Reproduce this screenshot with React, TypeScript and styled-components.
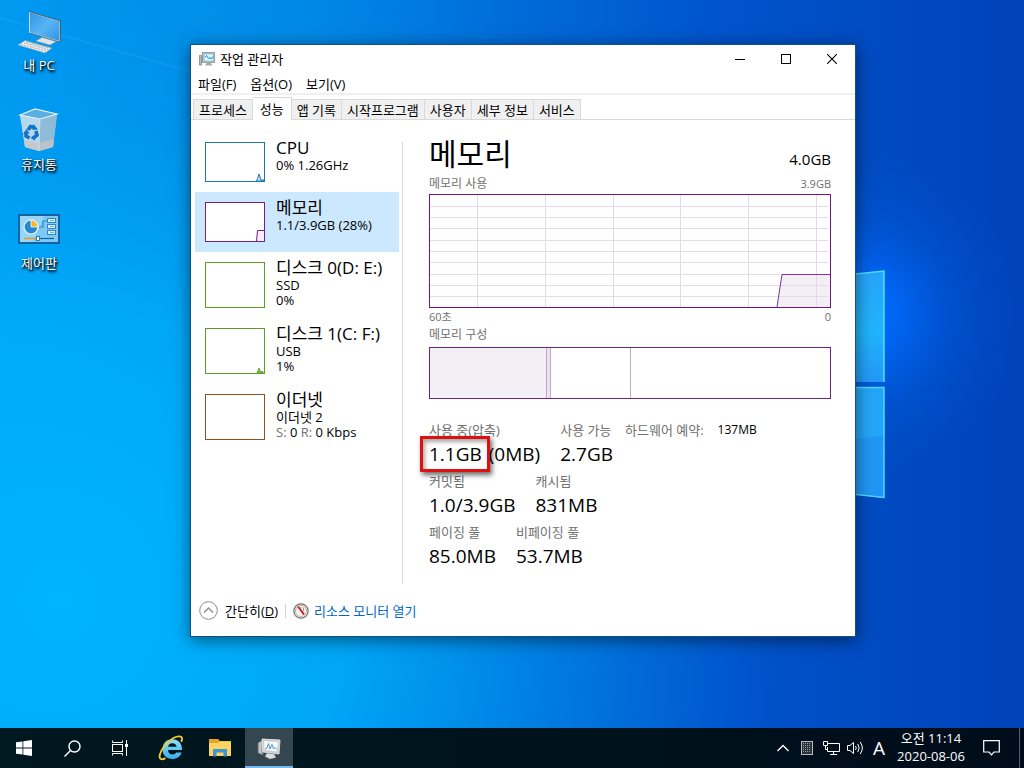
import React from "react";
import styled, { createGlobalStyle, css } from "styled-components";

const GlobalStyle = createGlobalStyle`
  *, *::before, *::after { box-sizing: border-box; }
  body {
    margin: 0;
    background: #0078d7;
    font-family: "Open Sans", "Noto Sans CJK KR", sans-serif;
    font-size: 13px;
    color: #000;
  }
  button { font: inherit; color: inherit; background: none; border: 0; padding: 0; }
  h1, h2, p, dl, dd, dt, ul { margin: 0; padding: 0; font-weight: 400; }
  svg { display: block; }
`;

/* ---------- desktop ---------- */

const Desktop = styled.div`
  position: relative;
  display: flex;
  flex-direction: column;
  min-height: 100vh;
  overflow: hidden;
`;

const WallpaperArt = styled.svg`
  position: absolute;
  inset: 0;
  width: 100%;
  height: 100%;
`;

const Workspace = styled.main`
  position: relative;
  flex: 1;
  display: grid;
  grid-template-columns: 190px minmax(0, 1fr);
  align-items: start;
  padding-right: 168px;
`;

const IconColumn = styled.nav`
  display: flex;
  flex-direction: column;
  align-items: flex-start;
  gap: 32px;
  padding: 8px 0 0 1px;
`;

const Shortcut = styled.button`
  display: flex;
  flex-direction: column;
  align-items: center;
  width: 76px;
  height: 67px;
  line-height: 19px;
  color: #fff;
  text-shadow: 1px 1px 2px #000, 1px 2px 3px #000;
`;

/* ---------- window ---------- */

const Window = styled.section`
  margin-top: 44px;
  margin-bottom: 24px;
  background: #fff;
  border: 1px solid #12507f;
  box-shadow: 0 3px 16px rgba(0, 0, 0, 0.5);
`;

const TitleBar = styled.header`
  display: flex;
  align-items: center;
  height: 28px;
  padding-left: 8px;
  gap: 5px;
`;

const TitleText = styled.h2`
  flex: 1;
  font-size: 13px;
  line-height: 18px;
`;

const CaptionButtons = styled.div`
  display: flex;
  height: 28px;
`;

const CaptionButton = styled.button`
  display: grid;
  place-items: center;
  width: 46px;
`;

const MenuBar = styled.nav`
  display: flex;
  gap: 14px;
  height: 22px;
  padding: 2px 0 0 7px;
  line-height: 18px;
  border-bottom: 2px solid #f0f0f0;
`;

const TabBar = styled.div`
  display: flex;
  align-items: flex-end;
  height: 25px;
  padding-left: 2px;
  border-bottom: 1px solid #d9d9d9;
`;

const Tab = styled.button<{ $active?: boolean }>`
  height: 20px;
  padding: 0 5px;
  line-height: 18px;
  white-space: nowrap;
  background: #f0f0f0;
  border: solid #d9d9d9;
  border-width: 1px 1px 0 0;

  &:first-child { border-left-width: 1px; }

  ${(p) =>
    p.$active &&
    css`
      height: 23px;
      padding: 0 7px;
      margin-bottom: -1px;
      background: #fff;
    `}
`;

const Body = styled.div`
  display: flex;
  padding: 12px 24px 0 4px;
`;

const Sidebar = styled.div`
  display: flex;
  flex-direction: column;
  width: 204px;
  flex: none;
`;

const ResourceItem = styled.button<{ $selected?: boolean }>`
  display: flex;
  align-items: flex-start;
  gap: 11px;
  padding: 10px;
  text-align: left;
  white-space: nowrap;
  background: ${(p) => (p.$selected ? "#cce8ff" : "transparent")};
`;

const Thumb = styled.span<{ $color: string; $tall?: boolean }>`
  flex: none;
  width: 60px;
  height: ${(p) => (p.$tall ? 46 : 40)}px;
  background: #fff;
  border: 1px solid ${(p) => p.$color};
`;

const ResourceText = styled.span`
  display: flex;
  flex-direction: column;
  margin: -4px 0;
  line-height: 15px;
`;

const ResourceName = styled.span`
  font-size: 17px;
  line-height: 20px;
`;

const Dim = styled.span`
  color: #707070;
`;

const Divider = styled.div`
  flex: none;
  width: 1px;
  margin: 10px 26px 0 3px;
  background: #d9d9d9;
`;

const Detail = styled.div`
  flex: 1;
  min-width: 0;
  padding: 4px 0 16px;
`;

const DetailHeader = styled.header`
  display: flex;
  justify-content: space-between;
  align-items: baseline;
  height: 39px;
`;

const Heading = styled.h1`
  font-size: 30px;
  line-height: 36px;
`;

const Capacity = styled.span`
  font-size: 15px;
`;

const Caption = styled.div`
  display: flex;
  justify-content: space-between;
  font-size: 12px;
  line-height: 18px;
  color: #707070;
`;

const Small = styled.span`
  font-size: 11px;
`;

const Chart = styled.div`
  height: 114px;
  margin-top: 1px;
  border: 1px solid #70177f;

  svg { width: 100%; height: 100%; }
`;

const Composition = styled.div`
  display: flex;
  height: 52px;
  margin: 3px 0 22px;
  border: 1px solid #6b2479;
`;

const Segment = styled.div<{ $share: number; $fill?: string; $last?: boolean }>`
  flex: ${(p) => p.$share} 1 0;
  background: ${(p) => p.$fill ?? "#fff"};
  border-right: ${(p) => (p.$last ? "0" : "1px solid #c3a7cc")};
`;

const Stats = styled.div`
  display: flex;
  flex-direction: column;
  gap: 6px;
`;

const StatRow = styled.dl`
  display: flex;
  gap: 20px;
  white-space: nowrap;
`;

const Stat = styled.div`
  display: flex;
  flex-direction: column;
  gap: 3px;
`;

const StatLabel = styled.dt`
  line-height: 18px;
  color: #707070;
`;

const StatValue = styled.dd`
  font-size: 19px;
  line-height: 24px;
`;

const InlineStat = styled.div`
  display: flex;
  gap: 14px;
  margin-left: -8px;
  line-height: 18px;
`;

const InlineValue = styled.dd`
  font-size: 12px;
`;

const Highlighted = styled.span`
  position: relative;
  margin-right: 2px;

  &::after {
    content: "";
    position: absolute;
    inset: -5px -8px -5px -9px;
    border: 3px solid #e01010;
    box-shadow: 2px 3px 5px rgba(0, 0, 0, 0.6), inset 2px 3px 4px rgba(0, 0, 0, 0.35);
  }
`;

const Footer = styled.footer`
  display: flex;
  align-items: center;
  height: 52px;
  padding: 1px 8px 0;
`;

const FooterButton = styled.button`
  display: flex;
  align-items: center;
  gap: 7px;
`;

const FooterDivider = styled.span`
  width: 1px;
  height: 14px;
  margin: 0 7px;
  background: #d0d0d0;
`;

const FooterLink = styled.a`
  display: flex;
  align-items: center;
  gap: 5px;
  color: #0066cc;
  text-decoration: none;
`;

/* ---------- taskbar ---------- */

const Taskbar = styled.footer`
  position: relative;
  display: flex;
  justify-content: space-between;
  height: 40px;
  background: linear-gradient(90deg, #001820, #00121c 60%, #000c1a);
  color: #fff;
`;

const TaskGroup = styled.div`
  display: flex;
`;

const AppGroup = styled.div`
  display: flex;
  gap: 1px;
  margin-left: 3px;
`;

const TaskButton = styled.button<{ $active?: boolean }>`
  display: grid;
  place-items: center;
  width: 48px;
  height: 40px;
  box-shadow: inset 0 -2px 0 ${(p) => (p.$active ? "#76b9ed" : "transparent")};
  background: ${(p) => (p.$active ? "#34464f" : "transparent")};
`;

const Tray = styled.div`
  display: flex;
  align-items: center;
`;

const TrayButton = styled.button`
  display: grid;
  place-items: center;
  width: 24px;
  height: 40px;
  font-size: 19px;
`;

const Clock = styled.time`
  width: 72px;
  margin: 0 0 2px 4px;
  text-align: center;
  line-height: 18px;
`;

const NoticeButton = styled.button`
  display: grid;
  place-items: center;
  width: 48px;
  height: 40px;
  margin-right: 4px;
`;

const PeekEdge = styled.button`
  width: 5px;
  height: 40px;
  border-left: 1px solid #56616c;
`;

/* ---------- drawings ---------- */

const Wallpaper = () => (
  <WallpaperArt viewBox="0 0 1024 768" preserveAspectRatio="none" aria-hidden="true">
    <defs>
      <linearGradient id="base" x1="0" y1="0" x2="1" y2="0">
        <stop offset="0" stopColor="#009cf2" />
        <stop offset="0.3" stopColor="#0088e6" />
        <stop offset="0.5" stopColor="#006cd8" />
        <stop offset="0.7" stopColor="#0054cc" />
        <stop offset="1" stopColor="#0042b8" />
      </linearGradient>
      <radialGradient id="cyan" gradientUnits="userSpaceOnUse" cx="60" cy="600" r="720">
        <stop offset="0" stopColor="#00b4fe" />
        <stop offset="0.4" stopColor="#00acfa" stopOpacity="0.85" />
        <stop offset="0.7" stopColor="#0098f0" stopOpacity="0.4" />
        <stop offset="1" stopColor="#0084e4" stopOpacity="0" />
      </radialGradient>
      <radialGradient id="glow" gradientUnits="userSpaceOnUse" cx="860" cy="315" r="160">
        <stop offset="0" stopColor="#006cff" />
        <stop offset="0.25" stopColor="#0069fa" stopOpacity="0.85" />
        <stop offset="0.6" stopColor="#005ee4" stopOpacity="0.35" />
        <stop offset="1" stopColor="#0058d8" stopOpacity="0" />
      </radialGradient>
      <linearGradient id="pane" x1="0" y1="0" x2="0" y2="1">
        <stop offset="0" stopColor="#28a4fa" />
        <stop offset="0.55" stopColor="#20b4fc" />
        <stop offset="1" stopColor="#2498f6" />
      </linearGradient>
    </defs>
    <rect width="1024" height="768" fill="url(#base)" />
    <rect width="1024" height="768" fill="url(#cyan)" />
    <rect width="1024" height="768" fill="url(#glow)" />
    <path d="M0 18 L400 130" stroke="#3cb4fa" strokeWidth="2" opacity="0.2" />
    <path d="M700 290 L884 271 V382 H700Z" fill="url(#pane)" />
    <path d="M700 387 H884 V498 L700 478Z" fill="#2196f4" />
    <path d="M700 387 H884 V436 L700 455Z" fill="#24a6f8" />
    <path d="M700 290 L884 271 V382" fill="none" stroke="#4ce0fc" strokeWidth="1.500" />
    <path d="M700 387.500 H884 V497.500 L700 478" fill="none" stroke="#4cd8fc" strokeWidth="1.500" />
  </WallpaperArt>
);

const PcIcon = () => (
  <svg width="48" height="48" viewBox="0 0 48 48" aria-hidden="true">
    <defs>
      <linearGradient id="scr" x1="0" y1="0" x2="1" y2="1">
        <stop offset="0" stopColor="#2f94e4" />
        <stop offset="0.5" stopColor="#58b4f4" />
        <stop offset="1" stopColor="#2f94e4" />
      </linearGradient>
    </defs>
    <path d="M14.500 4 L44.500 13 V33.500 L14.500 24.500Z" fill="url(#scr)" stroke="#cbdbe4" strokeWidth="1" />
    <path d="M14 3.500 L45.200 12.800 V34.200" fill="none" stroke="#36505f" strokeWidth="0.900" />
    <path d="M15 25 L45 34.200" fill="none" stroke="#4a6472" strokeWidth="0.800" />
    <path d="M27 29 L33 31 L33 33 L27 32Z" fill="#8b979e" />
    <path d="M21 33 L27 29.500 L41 33.500 L35 37Z" fill="#dfe5e8" stroke="#96a2a8" strokeWidth="0.500" />
    <path d="M3 37 L10 32.500 L37 40 L30 45Z" fill="#eef1f3" stroke="#8f9aa2" strokeWidth="0.600" />
    <path d="M6 36.500 L31 43 M9 35 L33 41.500 M11 33.800 L35 40.300" stroke="#96a3ab" strokeWidth="0.900" strokeDasharray="2 1" />
  </svg>
);

const BinIcon = () => (
  <svg width="48" height="48" viewBox="0 0 48 48" aria-hidden="true">
    <path d="M5 8 L20 2 L42 7 L38 40 L24 44 L10 40Z" fill="#9cc9e4" />
    <path d="M5 8 L25 12 L24 44 L10 40Z" fill="#b6d8ec" />
    <path d="M25 12 L42 7 L38 40 L24 44Z" fill="#8dbbd8" />
    <path d="M9 33 L24 36 L39 32 L38 40 L24 44 L10 40Z" fill="#c9c4c6" opacity="0.8" />
    <path d="M5 8 L20 2 L42 7 L25 12Z" fill="#5aaee0" stroke="#e4f1f8" strokeWidth="1.200" />
    <path d="M25 12 L24 44" stroke="#d8eaf4" strokeWidth="0.600" />
    <g fill="none" stroke="#1272c8" strokeWidth="3.600">
      <path d="M13 23 L15.500 19.500 L19.500 20.500" />
      <path d="M21 24 L22 28 L18.500 31" />
      <path d="M14.500 31 L11 29 L11 25.500" />
    </g>
    <path d="M18.500 17 L23 22.500 L17.500 23Z M20 27.500 L15.500 31 L20 33.500Z M8 27 L11.500 22 L14.500 26.500Z" fill="#1272c8" />
  </svg>
);

const PanelIcon = () => (
  <svg width="48" height="48" viewBox="0 0 48 48" aria-hidden="true">
    <rect x="4" y="9" width="40" height="28" fill="#7ccaf5" stroke="#15639f" strokeWidth="2" />
    <path d="M5 10 H29 L18 36 H5Z" fill="#a4dbf9" opacity="0.7" />
    <circle cx="16" cy="21" r="7" fill="#2688d0" stroke="#e8f6fe" strokeWidth="1.200" />
    <path d="M16 21 V14 A7 7 0 0 1 23 21Z" fill="#f8b62c" stroke="#fff" strokeWidth="0.800" />
    <path d="M24 21 H28 V15 H32" fill="none" stroke="#3585bd" strokeWidth="1.200" />
    <g fill="#d4effc" stroke="#3585bd" strokeWidth="1">
      <rect x="32.500" y="12.500" width="8" height="4" />
      <rect x="32.500" y="18.500" width="8" height="4" />
      <rect x="32.500" y="24.500" width="8" height="4" />
    </g>
    <path d="M35 14.500 H39 M35 20.500 H39 M35 26.500 H39" stroke="#6fb6e0" strokeWidth="1" />
    <path d="M9 32.500 H22" stroke="#e09a20" strokeWidth="1.500" />
    <path d="M24 32.500 H39" stroke="#15639f" strokeWidth="1.200" />
    <rect x="21.500" y="30.500" width="3" height="4" fill="#fff" stroke="#15639f" strokeWidth="0.800" />
  </svg>
);

const MonitorIcon = ({ size }: { size: number }) => (
  <svg width={size} height={size} viewBox="0 0 16 16" aria-hidden="true">
    <path d="M0.500 4.500 H2.500 V14 H0.500Z" fill="#b4b8ba" stroke="#74797c" strokeWidth="0.700" />
    <rect x="3.500" y="1.500" width="12" height="10" fill="#b9bdbf" stroke="#8a8f92" strokeWidth="0.800" />
    <rect x="5" y="3" width="9" height="7" fill="#dcf6fd" stroke="#6fb4cc" strokeWidth="0.500" />
    <path d="M5.500 6.500 L7.500 4.500 L9.500 7.500 L11 6.500 L12 8 L14 5.500" fill="none" stroke="#2a8fcc" strokeWidth="1" />
    <path d="M8 11.500 H11.500 L13.500 14.500 H6Z" fill="#a7abad" />
  </svg>
);

const TaskMonitorIcon = () => (
  <svg width="24" height="24" viewBox="0 0 24 24" aria-hidden="true">
    <path d="M1 7 L6 4 V19 L1 17Z" fill="#a7aaac" stroke="#6f7476" strokeWidth="0.600" />
    <path d="M3 6 L3 17" stroke="#dfe1e2" />
    <path d="M5 3 L23 4 L22 18 L6 16Z" fill="#c9cccd" stroke="#f0f1f1" strokeWidth="0.800" />
    <path d="M7 5 L21 6 L20 15.500 L7.500 14Z" fill="#f4f8fa" />
    <path d="M8 13 L10 12 L11.500 7.500 L13 13 L15 8.500 L16.500 13 L18 11.500 L20 13.500" fill="none" stroke="#4a8cc4" strokeWidth="0.900" />
    <path d="M10 17 L17 18 L19 21.500 L13 23 L8 20.500Z" fill="#dcdede" stroke="#8c9092" strokeWidth="0.500" />
  </svg>
);

const GaugeIcon = () => (
  <svg width="16" height="16" viewBox="0 0 16 16" aria-hidden="true">
    <circle cx="8" cy="8" r="7.200" fill="#e9e6e0" stroke="#77736c" strokeWidth="1.200" />
    <circle cx="8" cy="8" r="5.500" fill="#f7f3ec" stroke="#b0aba2" strokeWidth="0.800" />
    <path d="M4 3.500 L6 3.500 L11.800 11 L10.200 12Z" fill="#c4161c" />
    <path d="M8 4 V6 M10.500 4.500 V8" stroke="#8a857d" strokeWidth="0.800" />
  </svg>
);

const IeIcon = () => (
  <svg width="26" height="26" viewBox="0 0 26 26" aria-hidden="true">
    <defs>
      <linearGradient id="ie" x1="0" y1="0" x2="0" y2="1">
        <stop offset="0" stopColor="#8fe0fb" />
        <stop offset="1" stopColor="#38aee8" />
      </linearGradient>
    </defs>
    <path
      fillRule="evenodd"
      fill="url(#ie)"
      d="M24 15 H10 C10.200 18 12 19.500 14.500 19.500 C16.400 19.500 17.600 18.700 18.200 17.500 H23.600 C22.400 21.500 19 24 14.300 24 C8.600 24 4.500 20 4.500 14.200 C4.500 8.300 8.600 4.200 14.300 4.200 C20.400 4.200 24.300 8.500 24 15Z M10.100 11.700 H18.600 C18.400 9.500 16.800 8.200 14.400 8.200 C12 8.200 10.400 9.500 10.100 11.700Z"
    />
    <path
      d="M7.500 23.200 C3.500 25.300 0.800 24.300 1.800 19.800 C3 14.500 9 6.500 15.500 3 C19.500 0.900 23.600 0.800 24 3.200 C24.200 4.400 23.800 5.500 23.200 6.800"
      fill="none"
      stroke="#f3c832"
      strokeWidth="1.900"
    />
  </svg>
);

const FolderIcon = () => (
  <svg width="22" height="20" viewBox="0 0 22 20" aria-hidden="true">
    <path d="M0 1 H9 L11 3 H22 V18 H0Z" fill="#e5a723" />
    <path d="M0 5 H9 L11 3.500 H22 V18 H0Z" fill="#fbd464" />
    <path d="M4 18.500 V11 H18 V18.500 H14.500 V14.500 H7.500 V18.500Z" fill="#3e94d4" />
  </svg>
);

/* ---------- data ---------- */

type Resource = {
  name: string;
  lines: React.ReactNode[];
  color: string;
  tall?: boolean;
  selected?: boolean;
  trace?: React.ReactNode;
};

const resources: Resource[] = [
  {
    name: "CPU",
    lines: ["0% 1.26GHz"],
    color: "#1a78a8",
    trace: (
      <svg width="58" height="38" viewBox="0 0 58 38" aria-hidden="true">
        <path d="M50 38 L51.500 36 L53 31 L55 37 L58 37 V38Z" fill="#d4e9f4" stroke="#1a78a8" />
      </svg>
    ),
  },
  {
    name: "메모리",
    lines: ["1.1/3.9GB (28%)"],
    color: "#7b1a90",
    selected: true,
    trace: (
      <svg width="58" height="38" viewBox="0 0 58 38" aria-hidden="true">
        <path d="M50.500 38 L51.500 27.500 H58 V38Z" fill="#f3eff5" />
        <path d="M50.500 38 L51.500 27.500 H58" fill="none" stroke="#7b1a90" />
      </svg>
    ),
  },
  { name: "디스크 0(D: E:)", lines: ["SSD", "0%"], color: "#5a9e28", tall: true },
  {
    name: "디스크 1(C: F:)",
    lines: ["USB", "1%"],
    color: "#5a9e28",
    tall: true,
    trace: (
      <svg width="58" height="44" viewBox="0 0 58 44" aria-hidden="true">
        <path d="M51 44 L53 39 L54.500 43 L56 42 L57.500 44Z" fill="#7dbb50" stroke="#5a9e28" strokeWidth="0.800" />
      </svg>
    ),
  },
  {
    name: "이더넷",
    lines: [
      "이더넷 2",
      <>
        <Dim>S:</Dim> 0 <Dim>R:</Dim> 0 Kbps
      </>,
    ],
    color: "#8e4f22",
    tall: true,
  },
];

const tabs = ["프로세스", "성능", "앱 기록", "시작프로그램", "사용자", "세부 정보", "서비스"];
const menus = ["파일(F)", "옵션(O)", "보기(V)"];
const gridX = [47.5, 115.5, 183.5, 250.5, 318.5, 386.5];
const gridY = [11.5, 22.5, 33.5, 45.5, 56.5, 67.5, 79.5, 90.5, 101.5];

/* ---------- page ---------- */

const MemoryChart = () => (
  <Chart>
    <svg viewBox="0 0 400 112" preserveAspectRatio="none" role="img" aria-label="메모리 사용">
      <path d="M347 112 L352 79.500 H400 V112Z" fill="#f3f0f5" />
      {gridX.map((x) => (
        <path key={x} d={`M${x} 0 V112`} stroke="#e6dae9" />
      ))}
      {gridY.map((y) => (
        <path key={y} d={`M0 ${y} H398`} stroke="#e6dae9" />
      ))}
      <path d="M347 112 L352 79.500 H400" fill="none" stroke="#84309a" />
    </svg>
  </Chart>
);

const TaskManager = () => (
  <Window aria-label="작업 관리자">
    <TitleBar>
      <MonitorIcon size={16} />
      <TitleText>작업 관리자</TitleText>
      <CaptionButtons>
        <CaptionButton aria-label="최소화">
          <svg width="10" height="10" viewBox="0 0 10 10"><path d="M0 5.500 H10" stroke="#000" /></svg>
        </CaptionButton>
        <CaptionButton aria-label="최대화">
          <svg width="10" height="10" viewBox="0 0 10 10"><rect x="0.500" y="0.500" width="9" height="9" fill="none" stroke="#000" /></svg>
        </CaptionButton>
        <CaptionButton aria-label="닫기">
          <svg width="10" height="10" viewBox="0 0 10 10"><path d="M0 0 L10 10 M10 0 L0 10" stroke="#000" strokeWidth="1.100" /></svg>
        </CaptionButton>
      </CaptionButtons>
    </TitleBar>
    <MenuBar>
      {menus.map((m) => (
        <button key={m}>{m}</button>
      ))}
    </MenuBar>
    <TabBar role="tablist">
      {tabs.map((t) => (
        <Tab key={t} role="tab" aria-selected={t === "성능"} $active={t === "성능"}>
          {t}
        </Tab>
      ))}
    </TabBar>
    <Body>
      <Sidebar>
        {resources.map((r) => (
          <ResourceItem key={r.name} $selected={r.selected}>
            <Thumb $color={r.color} $tall={r.tall}>{r.trace}</Thumb>
            <ResourceText>
              <ResourceName>{r.name}</ResourceName>
              {r.lines.map((line, i) => (
                <span key={i}>{line}</span>
              ))}
            </ResourceText>
          </ResourceItem>
        ))}
      </Sidebar>
      <Divider />
      <Detail>
        <DetailHeader>
          <Heading>메모리</Heading>
          <Capacity>4.0GB</Capacity>
        </DetailHeader>
        <Caption>
          <span>메모리 사용</span>
          <Small>3.9GB</Small>
        </Caption>
        <MemoryChart />
        <Caption>
          <Small>60초</Small>
          <Small>0</Small>
        </Caption>
        <Caption>메모리 구성</Caption>
        <Composition>
          <Segment $share={116} $fill="#f3f0f5" />
          <Segment $share={3} $fill="#eee2f0" />
          <Segment $share={79} />
          <Segment $share={200} $last />
        </Composition>
        <Stats>
          <StatRow>
            <Stat>
              <StatLabel>사용 중(압축)</StatLabel>
              <StatValue>
                <Highlighted>1.1GB</Highlighted> (0MB)
              </StatValue>
            </Stat>
            <Stat>
              <StatLabel>사용 가능</StatLabel>
              <StatValue>2.7GB</StatValue>
            </Stat>
            <InlineStat>
              <StatLabel>하드웨어 예약:</StatLabel>
              <InlineValue>137MB</InlineValue>
            </InlineStat>
          </StatRow>
          <StatRow>
            <Stat>
              <StatLabel>커밋됨</StatLabel>
              <StatValue>1.0/3.9GB</StatValue>
            </Stat>
            <Stat>
              <StatLabel>캐시됨</StatLabel>
              <StatValue>831MB</StatValue>
            </Stat>
          </StatRow>
          <StatRow>
            <Stat>
              <StatLabel>페이징 풀</StatLabel>
              <StatValue>85.0MB</StatValue>
            </Stat>
            <Stat>
              <StatLabel>비페이징 풀</StatLabel>
              <StatValue>53.7MB</StatValue>
            </Stat>
          </StatRow>
        </Stats>
      </Detail>
    </Body>
    <Footer>
      <FooterButton>
        <svg width="19" height="19" viewBox="0 0 19 19" aria-hidden="true">
          <circle cx="9.500" cy="9.500" r="8.800" fill="#fff" stroke="#8c8c8c" />
          <path d="M5 11.500 L9.500 7 L14 11.500" fill="none" stroke="#8c8c8c" strokeWidth="1.400" />
        </svg>
        <span>간단히(<u>D</u>)</span>
      </FooterButton>
      <FooterDivider />
      <FooterLink href="#resmon">
        <GaugeIcon />
        리소스 모니터 열기
      </FooterLink>
    </Footer>
  </Window>
);

export default function App() {
  return (
    <>
      <GlobalStyle />
      <Desktop>
        <Wallpaper />
        <Workspace>
          <IconColumn>
            <Shortcut><PcIcon />내 PC</Shortcut>
            <Shortcut><BinIcon />휴지통</Shortcut>
            <Shortcut><PanelIcon />제어판</Shortcut>
          </IconColumn>
          <TaskManager />
        </Workspace>
        <Taskbar>
          <TaskGroup>
            <TaskButton aria-label="시작">
              <svg width="16" height="16" viewBox="0 0 16 16" fill="#fff">
                <path d="M0 2.300 L6.500 1.400 V7.600 H0Z M7.300 1.300 L16 0 V7.600 H7.300Z M0 8.400 H6.500 V14.600 L0 13.700Z M7.300 8.400 H16 V16 L7.300 14.700Z" />
              </svg>
            </TaskButton>
            <TaskButton aria-label="검색">
              <svg width="17" height="17" viewBox="0 0 17 17" fill="none" stroke="#fff" strokeWidth="1.400">
                <circle cx="10.500" cy="6.500" r="5.500" />
                <path d="M6.500 10.500 L0.500 16.500" />
              </svg>
            </TaskButton>
            <TaskButton aria-label="작업 보기">
              <svg width="16" height="16" viewBox="0 0 16 16" fill="none" stroke="#fff">
                <rect x="0.500" y="4.500" width="10" height="7" />
                <path d="M0.500 0.500 V2.500 H10.500 V0.500 M0.500 15.500 V13.500 H10.500 V15.500 M14.500 0 V16" />
                <rect x="13.500" y="4.500" width="2" height="2" fill="#fff" />
              </svg>
            </TaskButton>
            <AppGroup>
              <TaskButton aria-label="Internet Explorer"><IeIcon /></TaskButton>
              <TaskButton aria-label="파일 탐색기"><FolderIcon /></TaskButton>
              <TaskButton aria-label="작업 관리자" $active><TaskMonitorIcon /></TaskButton>
            </AppGroup>
          </TaskGroup>
          <Tray>
            <TrayButton aria-label="숨겨진 아이콘 표시">
              <svg width="12" height="8" viewBox="0 0 12 8"><path d="M0.500 7 L6 1.500 L11.500 7" fill="none" stroke="#fff" strokeWidth="1.300" /></svg>
            </TrayButton>
            <TrayButton aria-label="터치 키보드">
              <svg width="12" height="14" viewBox="0 0 12 14">
                <rect x="0.500" y="0.500" width="11" height="13" fill="#2c3238" stroke="#b8bcc0" />
                <path d="M2 2.500 H10 M2 4.500 H10 M2 6.500 H10 M2 8.500 H10 M2 10.500 H10" stroke="#9a9fa4" strokeDasharray="1 1" />
              </svg>
            </TrayButton>
            <TrayButton aria-label="네트워크">
              <svg width="17" height="14" viewBox="0 0 17 14" fill="none" stroke="#fff">
                <path d="M5 2.500 H16.500 V10.500 H4.500 V6 M10.500 10.500 V13 M7 13.500 H14" />
                <path d="M0.500 0.500 H4.500 V4.500 H0.500Z M2.500 4.500 V8.500 H4.500" />
              </svg>
            </TrayButton>
            <TrayButton aria-label="볼륨">
              <svg width="17" height="14" viewBox="0 0 17 14" fill="none" stroke="#fff">
                <path d="M0.500 4.500 H3 L6.500 1.500 V12.500 L3 9.500 H0.500Z" />
                <path d="M8.500 5 Q10 7 8.500 9 M10.800 3 Q13.500 7 10.800 11 M13.200 1 Q17.500 7 13.200 13" />
              </svg>
            </TrayButton>
            <TrayButton aria-label="입력 언어">A</TrayButton>
            <Clock dateTime="2020-08-06T11:14">
              오전 11:14
              <br />
              2020-08-06
            </Clock>
            <NoticeButton aria-label="알림">
              <svg width="17" height="16" viewBox="0 0 17 16" fill="none" stroke="#fff" strokeWidth="1.200">
                <path d="M0.700 0.700 H16.300 V12 H11 L8.500 14.800 L6 12 H0.700Z" />
              </svg>
            </NoticeButton>
            <PeekEdge aria-label="바탕 화면 보기" />
          </Tray>
        </Taskbar>
      </Desktop>
    </>
  );
}
